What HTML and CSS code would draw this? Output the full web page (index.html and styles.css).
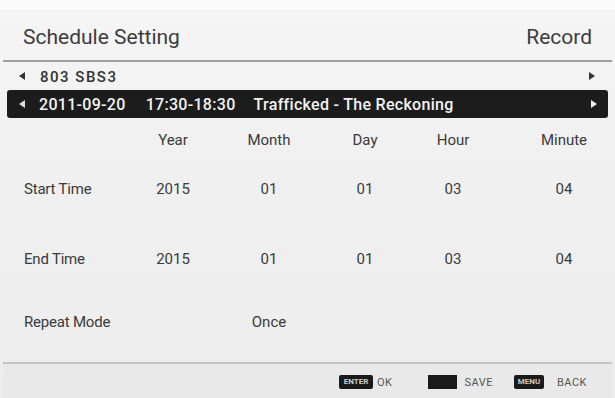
FILE: index.html
```html
<!DOCTYPE html>
<html>
<head>
<meta charset="utf-8">
<link rel="stylesheet" href="styles.css">
</head>
<body>
<div class="screen">
  <div class="header">
    <span class="title">Schedule Setting</span>
    <span class="mode">Record</span>
  </div>
  <div class="channel">
    <span class="arrow left"></span>
    <span class="channel-name">803 SBS3</span>
    <span class="arrow right"></span>
  </div>
  <div class="program">
    <span class="arrow left light"></span>
    <span class="p-date">2011-09-20</span>
    <span class="p-time">17:30-18:30</span>
    <span class="p-title">Trafficked - The Reckoning</span>
    <span class="arrow right light"></span>
  </div>
  <div class="grid">
    <div class="cell label"></div>
    <div class="cell">Year</div>
    <div class="cell">Month</div>
    <div class="cell">Day</div>
    <div class="cell">Hour</div>
    <div class="cell c-min">Minute</div>

    <div class="cell label">Start Time</div>
    <div class="cell">2015</div>
    <div class="cell">01</div>
    <div class="cell">01</div>
    <div class="cell">03</div>
    <div class="cell c-min">04</div>

    <div class="cell label">End Time</div>
    <div class="cell">2015</div>
    <div class="cell">01</div>
    <div class="cell">01</div>
    <div class="cell">03</div>
    <div class="cell c-min">04</div>

    <div class="cell label">Repeat Mode</div>
    <div class="cell"></div>
    <div class="cell">Once</div>
    <div class="cell"></div>
    <div class="cell"></div>
    <div class="cell c-min"></div>
  </div>
  <div class="footer">
    <span class="key k-enter">ENTER</span><span class="hint h-ok">OK</span>
    <span class="key k-save"></span><span class="hint h-save">SAVE</span>
    <span class="key k-menu">MENU</span><span class="hint h-back">BACK</span>
  </div>
</div>
</body>
</html>
```

FILE: styles.css
```css
html, body {
  margin: 0;
  padding: 0;
}
body {
  width: 615px;
  height: 398px;
  overflow: hidden;
  background: #fbfbfb;
  font-family: Roboto, "Liberation Sans", sans-serif;
  color: #3a3a3a;
}
.screen {
  margin-top: 10px;
  height: 388px;
  background: linear-gradient(180deg, #f5f5f5 0%, #f0f0f0 40%, #ededed 100%);
  display: flex;
  flex-direction: column;
}
.header {
  height: 50px;
  margin: 0 3px;
  padding: 0 20px 0 20px;
  display: flex;
  justify-content: space-between;
  align-items: center;
  border-bottom: 2px solid #a0a0a0;
}
.title,
.mode {
  font-size: 21px;
  color: #3c3c3c;
  padding-top: 4px;
}
.channel {
  height: 28px;
  display: flex;
  align-items: center;
  padding: 0 20px 0 19px;
}
.channel-name {
  flex: 1;
  font-size: 15px;
  font-weight: 500;
  color: #333;
  margin-left: 15px;
  letter-spacing: 1.5px;
  padding-top: 2px;
}
.arrow {
  width: 0;
  height: 0;
  border-top: 4px solid transparent;
  border-bottom: 4px solid transparent;
}
.arrow.left {
  border-right: 6px solid #333;
}
.arrow.right {
  border-left: 6px solid #333;
}
.arrow.left.light {
  border-right-color: #ddd;
}
.arrow.right.light {
  border-left-color: #f2f2f2;
}
.program {
  height: 28px;
  margin: 0 7px;
  background: #1c1c1c;
  border-radius: 3px;
  display: flex;
  align-items: center;
  padding: 0 11px 0 12px;
  color: #f2f2f2;
  font-size: 16px;
  font-weight: 500;
  letter-spacing: 0.3px;
  white-space: nowrap;
}
.p-date {
  margin-left: 14px;
  margin-right: 20px;
}
.p-time {
  margin-right: 18px;
}
.p-title {
  flex: 1;
}
.grid {
  display: grid;
  grid-template-columns: 125px 96px 96px 96px 80px 122px;
  grid-template-rows: 44px 54px 86px 40px;
  font-size: 15px;
  color: #3a3a3a;
}
.cell {
  display: flex;
  align-items: center;
  justify-content: center;
}
.cell.label {
  justify-content: flex-start;
  padding-left: 24px;
  font-size: 15px;
  letter-spacing: -0.2px;
}
.c-min {
  padding-left: 20px;
}
.footer {
  margin: 20px 3px 0;
  flex: 1;
  border-top: 2px solid #c4c4c4;
  background: #e9e9e9;
  display: flex;
  align-items: center;
  justify-content: flex-end;
  padding-right: 25px;
  padding-top: 2px;
  font-size: 11px;
  color: #555;
}
.key {
  background: #1a1a1a;
  color: #ccc;
  border-radius: 2px;
  font-size: 8px;
  font-weight: bold;
  height: 14px;
  line-height: 14px;
  text-align: center;
}
.k-enter {
  width: 34px;
  margin-right: 4px;
}
.k-save {
  width: 29px;
  border-radius: 0;
  margin-right: 7px;
}
.k-menu {
  width: 30px;
  margin-right: 13px;
}
.hint {
  letter-spacing: 0.5px;
}
.h-ok {
  margin-right: 36px;
}
.h-save {
  margin-right: 21px;
}
```
